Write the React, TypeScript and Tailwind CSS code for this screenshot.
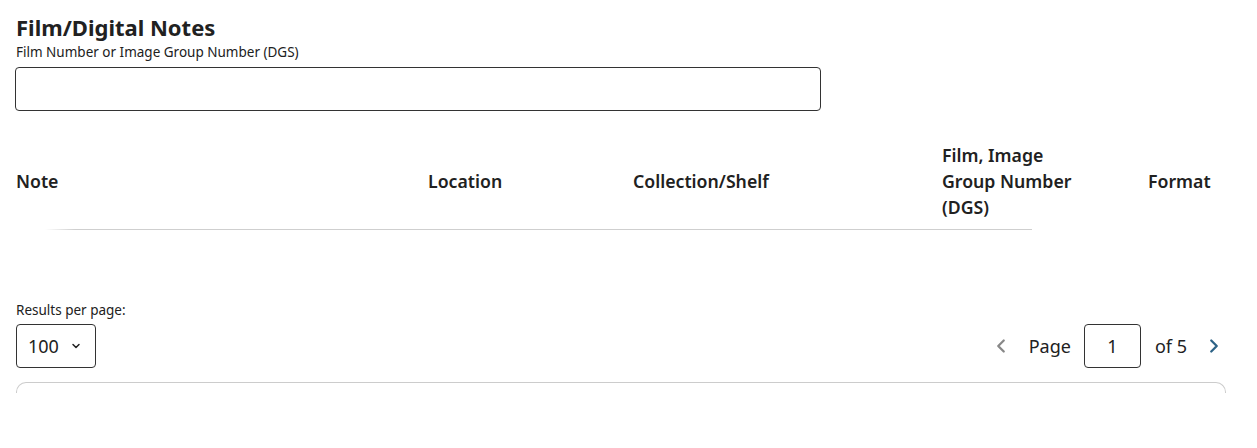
import React, { useState } from 'react';
import { ChevronLeft, ChevronRight, ChevronDown } from 'lucide-react';

const COLUMNS = [
  { label: 'Note', inner: '' },
  { label: 'Location', inner: '' },
  { label: 'Collection/Shelf', inner: '' },
  { label: 'Film, Image Group Number (DGS)', inner: 'max-w-[140px]' },
  { label: 'Format', inner: '' },
];

const App = () => {
  const [filmNumber, setFilmNumber] = useState('');
  const [page, setPage] = useState('1');

  return (
    <div className="w-full min-h-[448px] bg-white px-4 pt-[12px] text-[#212121] font-['Noto_Sans',sans-serif]">
      {/* 제목 */}
      <h1 className="text-[22px] leading-[30px] font-bold">Film/Digital Notes</h1>
      <label className="block text-[13.5px] leading-[18px] mt-[1px]">
        Film Number or Image Group Number (DGS)
      </label>
      <input
        value={filmNumber}
        onChange={(e) => setFilmNumber(e.target.value)}
        className="mt-[6px] -ml-px block w-[806px] h-[44px] rounded-[4px] border border-[#333] px-3 text-base outline-none"
      />

      {/* 테이블 헤더 */}
      <div className="mt-[23px] grid grid-cols-[412px_205px_309px_206px_1fr] items-center">
        {COLUMNS.map(({ label, inner }) => (
          <div key={label} className="pt-2 pb-[9px] text-[17.7px] leading-[26px] font-semibold">
            <div className={inner}>{label}</div>
          </div>
        ))}
      </div>
      <div className="ml-[29px] w-[987px] h-px bg-[linear-gradient(to_right,transparent,#cfcfcf_30px)]" />

      {/* 페이지 설정 */}
      <div className="mt-[71px] flex items-end justify-between pr-[16px]">
        <div className="flex flex-col">
          <span className="text-[13.5px] leading-[18px]">Results per page:</span>
          <button className="mt-[5px] flex items-center gap-[11px] w-[80px] h-[44px] rounded-[4px] border border-[#333] pl-[11px] text-[18px]">
            100
            <ChevronDown className="w-[12px] h-[12px]" strokeWidth={3} />
          </button>
        </div>
        <div className="flex items-center h-[44px] text-[18px]">
          <ChevronLeft className="w-[22px] h-[22px] text-[#888]" strokeWidth={2.5} />
          <span className="ml-[17px]">Page</span>
          <input
            value={page}
            onChange={(e) => setPage(e.target.value)}
            className="ml-[13px] w-[57px] h-[44px] rounded-[4px] border border-[#333] text-center outline-none"
          />
          <span className="ml-[14px]">of 5</span>
          <ChevronRight className="ml-[16px] w-[22px] h-[22px] text-[#2d6387]" strokeWidth={2.5} />
        </div>
      </div>

      {/* 결과 박스 */}
      <div className="mt-[14px] w-[1210px] h-[11px] rounded-t-[10px] border-t border-x border-[#cccccc]" />
    </div>
  );
};

export default App;
